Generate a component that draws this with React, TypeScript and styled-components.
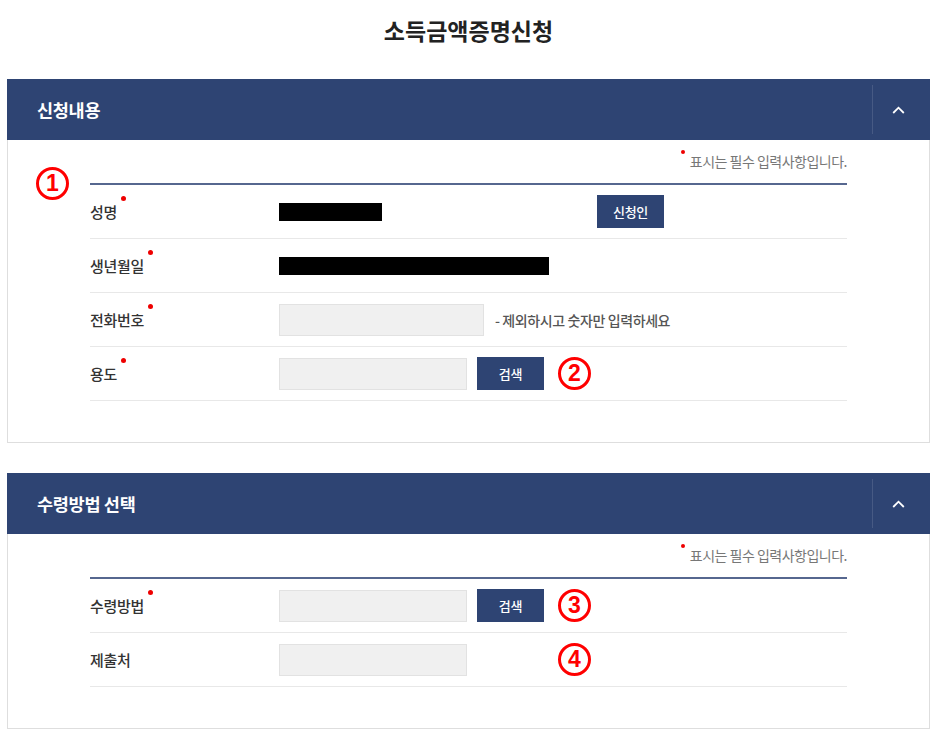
import React from "react";
import styled, { createGlobalStyle } from "styled-components";

const NAVY = "#2e4473";

const Global = createGlobalStyle`
  html, body { margin: 0; padding: 0; background: #fff; }
  body { font-family: "Noto Sans CJK KR", "Noto Sans", sans-serif; color: #333; }
  * { box-sizing: border-box; }
`;

const Page = styled.div`
  padding: 16px 9px 20px 7px;
`;

const Title = styled.h1`
  margin: 0 0 35px;
  text-align: center;
  font-size: 23px;
  line-height: 28px;
  font-weight: 700;
  color: #222;
  letter-spacing: 0;
`;

const Panel = styled.section<{ $gap?: number }>`
  margin-top: ${(p) => p.$gap ?? 0}px;
`;

const Header = styled.div`
  height: 61px;
  background: ${NAVY};
  display: flex;
  align-items: stretch;
  justify-content: space-between;
`;

const HeaderTitle = styled.h2`
  margin: 0;
  padding-left: 30px;
  display: flex;
  align-items: center;
  font-size: 17.5px;
  font-weight: 700;
  color: #fff;
  letter-spacing: -0.3px;
`;

const Toggle = styled.button`
  width: 58px;
  margin: 6px 0;
  border: none;
  border-left: 1px solid rgba(255, 255, 255, 0.12);
  background: transparent;
  display: flex;
  align-items: center;
  justify-content: center;
  padding: 0 6px 0 0;
  cursor: pointer;
`;

const Body = styled.div`
  position: relative;
  border: 1px solid #dedede;
  border-top: none;
  padding: 0 82px 41px 82px;
`;

const Note = styled.p`
  margin: 0;
  height: 43px;
  display: flex;
  justify-content: flex-end;
  align-items: center;
  padding-bottom: 2px;
  font-size: 14px;
  color: #777;
  letter-spacing: -0.5px;
`;

const NoteDot = styled.span`
  position: relative;
  padding-left: 9px;
  &::before {
    content: "";
    position: absolute;
    left: 0;
    top: -1px;
    width: 4px;
    height: 4px;
    border-radius: 50%;
    background: #e00;
  }
`;

const Table = styled.div`
  border-top: 2px solid #56678f;
`;

const Row = styled.div`
  height: 54px;
  display: grid;
  grid-template-columns: 189px 1fr;
  align-items: center;
  border-bottom: 1px solid #e8e8e8;
`;

const Label = styled.span<{ $required?: boolean }>`
  justify-self: start;
  position: relative;
  font-size: 15px;
  line-height: 20px;
  font-weight: 500;
  color: #333;
  letter-spacing: -0.3px;
  ${(p) =>
    p.$required &&
    `&::after {
      content: "";
      position: absolute;
      right: -9px;
      top: -6px;
      width: 5px;
      height: 5px;
      border-radius: 50%;
      background: #e00;
    }`}
`;

const Field = styled.div`
  display: flex;
  align-items: center;
  gap: 10px;
`;

const Redacted = styled.div<{ $w: number }>`
  width: ${(p) => p.$w}px;
  height: 18px;
  background: #000;
`;

const Input = styled.input<{ $w: number }>`
  width: ${(p) => p.$w}px;
  height: 32px;
  background: #f0f0f0;
  border: 1px solid #e2e2e2;
  outline: none;
  padding: 0 8px;
`;

const Button = styled.button<{ $push?: number }>`
  margin-left: ${(p) => p.$push ?? 0}px;
  width: 67px;
  height: 33px;
  border: none;
  background: ${NAVY};
  color: #fff;
  font-family: inherit;
  font-size: 13px;
  font-weight: 500;
  letter-spacing: -0.3px;
  padding: 0;
  cursor: pointer;
`;

const Hint = styled.span`
  margin-left: 1px;
  font-size: 14px;
  font-weight: 500;
  color: #555;
  letter-spacing: -0.4px;
`;

const Marker = styled.span<{ $push?: number }>`
  margin-left: ${(p) => p.$push ?? 4}px;
  width: 33px;
  height: 33px;
  border: 3px solid #f00;
  border-radius: 50%;
  color: #f00;
  display: inline-flex;
  align-items: center;
  justify-content: center;
  font-family: "Liberation Sans", Arial, sans-serif;
  font-weight: 700;
  font-size: 23px;
  line-height: 1;
`;

const CornerMarker = styled(Marker)`
  position: absolute;
  left: 28px;
  top: 27px;
  margin: 0;
`;

const Chevron = () => (
  <svg width="13" height="8" viewBox="0 0 13 8">
    <polyline points="1.2,7 6.5,1.7 11.8,7" fill="none" stroke="#fff" strokeWidth="1.8" />
  </svg>
);

const PanelHeader = ({ title }: { title: string }) => (
  <Header>
    <HeaderTitle>{title}</HeaderTitle>
    <Toggle aria-label="접기">
      <Chevron />
    </Toggle>
  </Header>
);

const RequiredNote = () => (
  <Note>
    <NoteDot>표시는 필수 입력사항입니다.</NoteDot>
  </Note>
);

export default function App() {
  return (
    <Page>
      <Global />
      <Title>소득금액증명신청</Title>

      <Panel>
        <PanelHeader title="신청내용" />
        <Body>
          <CornerMarker>1</CornerMarker>
          <RequiredNote />
          <Table>
            <Row>
              <Label $required>성명</Label>
              <Field>
                <Redacted $w={103} />
                <Button $push={205}>신청인</Button>
              </Field>
            </Row>
            <Row>
              <Label $required>생년월일</Label>
              <Field>
                <Redacted $w={270} />
              </Field>
            </Row>
            <Row>
              <Label $required>전화번호</Label>
              <Field>
                <Input $w={205} />
                <Hint>- 제외하시고 숫자만 입력하세요</Hint>
              </Field>
            </Row>
            <Row>
              <Label $required>용도</Label>
              <Field>
                <Input $w={188} />
                <Button>검색</Button>
                <Marker>2</Marker>
              </Field>
            </Row>
          </Table>
        </Body>
      </Panel>

      <Panel $gap={30}>
        <PanelHeader title="수령방법 선택" />
        <Body>
          <RequiredNote />
          <Table>
            <Row>
              <Label $required>수령방법</Label>
              <Field>
                <Input $w={188} />
                <Button>검색</Button>
                <Marker>3</Marker>
              </Field>
            </Row>
            <Row>
              <Label>제출처</Label>
              <Field>
                <Input $w={188} />
                <Marker $push={81}>4</Marker>
              </Field>
            </Row>
          </Table>
        </Body>
      </Panel>
    </Page>
  );
}
